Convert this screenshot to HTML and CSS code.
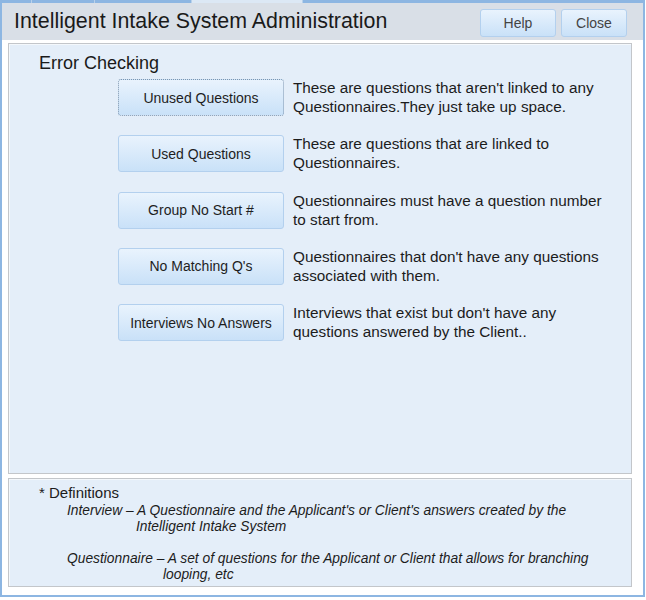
FILE: index.html
```html
<!DOCTYPE html>
<html>
<head>
<meta charset="utf-8">
<link rel="stylesheet" href="styles.css">
</head>
<body>
<div class="window">
  <div class="tabstrip">
    <span class="tab tab-a"></span><span class="tab tab-b"></span><span class="tab tab-c"></span><span class="tab tab-d"></span>
  </div>
  <header class="titlebar">
    <h1 class="title">Intelligent Intake System Administration</h1>
    <div class="actions">
      <button class="btn btn-help">Help</button>
      <button class="btn btn-close">Close</button>
    </div>
  </header>
  <main class="content">
    <section class="panel panel-main">
      <h2 class="section-title">Error Checking</h2>
      <div class="checks">
        <div class="check">
          <button class="btn btn-check is-focused">Unused Questions</button>
          <p class="desc">These are questions that aren't linked to any<br>Questionnaires.They just take up space.</p>
        </div>
        <div class="check">
          <button class="btn btn-check">Used Questions</button>
          <p class="desc">These are questions that are linked to<br>Questionnaires.</p>
        </div>
        <div class="check">
          <button class="btn btn-check">Group No Start #</button>
          <p class="desc">Questionnaires must have a question number<br>to start from.</p>
        </div>
        <div class="check">
          <button class="btn btn-check">No Matching Q's</button>
          <p class="desc">Questionnaires that don't have any questions<br>associated with them.</p>
        </div>
        <div class="check">
          <button class="btn btn-check">Interviews No Answers</button>
          <p class="desc">Interviews that exist but don't have any<br>questions answered by the Client..</p>
        </div>
      </div>
    </section>
    <section class="panel panel-defs">
      <h3 class="defs-title">* Definitions</h3>
      <div class="def def-interview">
        <span class="def-line">Interview – A Questionnaire and the Applicant's or Client's answers created by the</span>
        <span class="def-cont">Intelligent Intake System</span>
      </div>
      <div class="def def-questionnaire">
        <span class="def-line">Questionnaire – A set of questions for the Applicant or Client that allows for branching</span>
        <span class="def-cont">looping, etc</span>
      </div>
    </section>
  </main>
</div>
</body>
</html>
```

FILE: styles.css
```css
* { box-sizing: border-box; }

html, body {
  margin: 0;
  padding: 0;
  background: #ffffff;
}

body {
  font-family: "Liberation Sans", Arial, sans-serif;
  color: #1c1c1c;
}

.window {
  width: 645px;
  height: 597px;
  border-left: 2px solid #8db6e2;
  border-right: 2px solid #8db6e2;
  border-bottom: 2px solid #8db6e2;
  display: flex;
  flex-direction: column;
  background: #ffffff;
}

.tabstrip {
  height: 3px;
  display: flex;
  background: #8db6e2;
}

.tab { height: 3px; border-right: 1px solid #b9d1ea; }
.tab-a { width: 30px; }
.tab-b { width: 63px; }
.tab-c { width: 97px; }
.tab-d { width: 111px; background: #dce8f5; }

.titlebar {
  height: 37px;
  background: #d9dfe7;
  display: flex;
  align-items: center;
  justify-content: space-between;
  padding: 0 16px 0 12px;
}

.title {
  margin: 0 0 1px;
  font-size: 21.4px;
  font-weight: normal;
  color: #1a1a1a;
}

.actions {
  display: flex;
  gap: 5px;
  margin-top: 2px;
}

.btn {
  font-family: "Liberation Sans", Arial, sans-serif;
  font-size: 14px;
  color: #2a2a2a;
  background: linear-gradient(#e9f3fd, #c9e1f8);
  border: 1px solid #b3d0ee;
  border-radius: 3px;
  padding: 0;
  cursor: pointer;
}

.btn-help { width: 76px; height: 28px; color: #444; }
.btn-close { width: 66px; height: 28px; color: #444; }

.content {
  flex: 1;
  display: flex;
  flex-direction: column;
  gap: 4px;
  padding: 3px 11px 8px 6px;
}

.panel {
  background: #e4eef9;
  border: 1px solid #c3c6ca;
  box-shadow: inset 1px 1px 0 #f4f8fc;
}

.panel-main {
  height: 431px;
  padding: 8px 0 0 30px;
}

.section-title {
  margin: 0;
  font-size: 18px;
  font-weight: normal;
  line-height: 22px;
  color: #1a1a1a;
}

.checks {
  margin: 5px 0 0 79px;
  display: flex;
  flex-direction: column;
  gap: 19.3px;
}

.check {
  display: flex;
  gap: 9px;
  align-items: flex-start;
}

.btn-check {
  width: 166px;
  height: 37px;
  flex: none;
  color: #1e1e1e;
}

.btn-check.is-focused {
  border: 1px dotted #7d94ad;
}

.desc {
  margin: -1px 0 0;
  font-size: 15.3px;
  line-height: 19px;
  color: #1c1c1c;
}

.panel-defs {
  flex: 1;
  padding: 5px 0 0 30px;
}

.defs-title {
  margin: 0 0 1px;
  font-size: 15px;
  font-weight: normal;
  line-height: 18px;
}

.def {
  font-size: 13.8px;
  font-style: italic;
  line-height: 16px;
  color: #1c1c1c;
  white-space: nowrap;
  padding-left: 28px;
}

.def-line,
.def-cont {
  display: block;
}

.def-interview {
  margin-bottom: 16px;
}

.def-interview .def-cont {
  padding-left: 69px;
}

.def-questionnaire .def-cont {
  padding-left: 96px;
}
```
